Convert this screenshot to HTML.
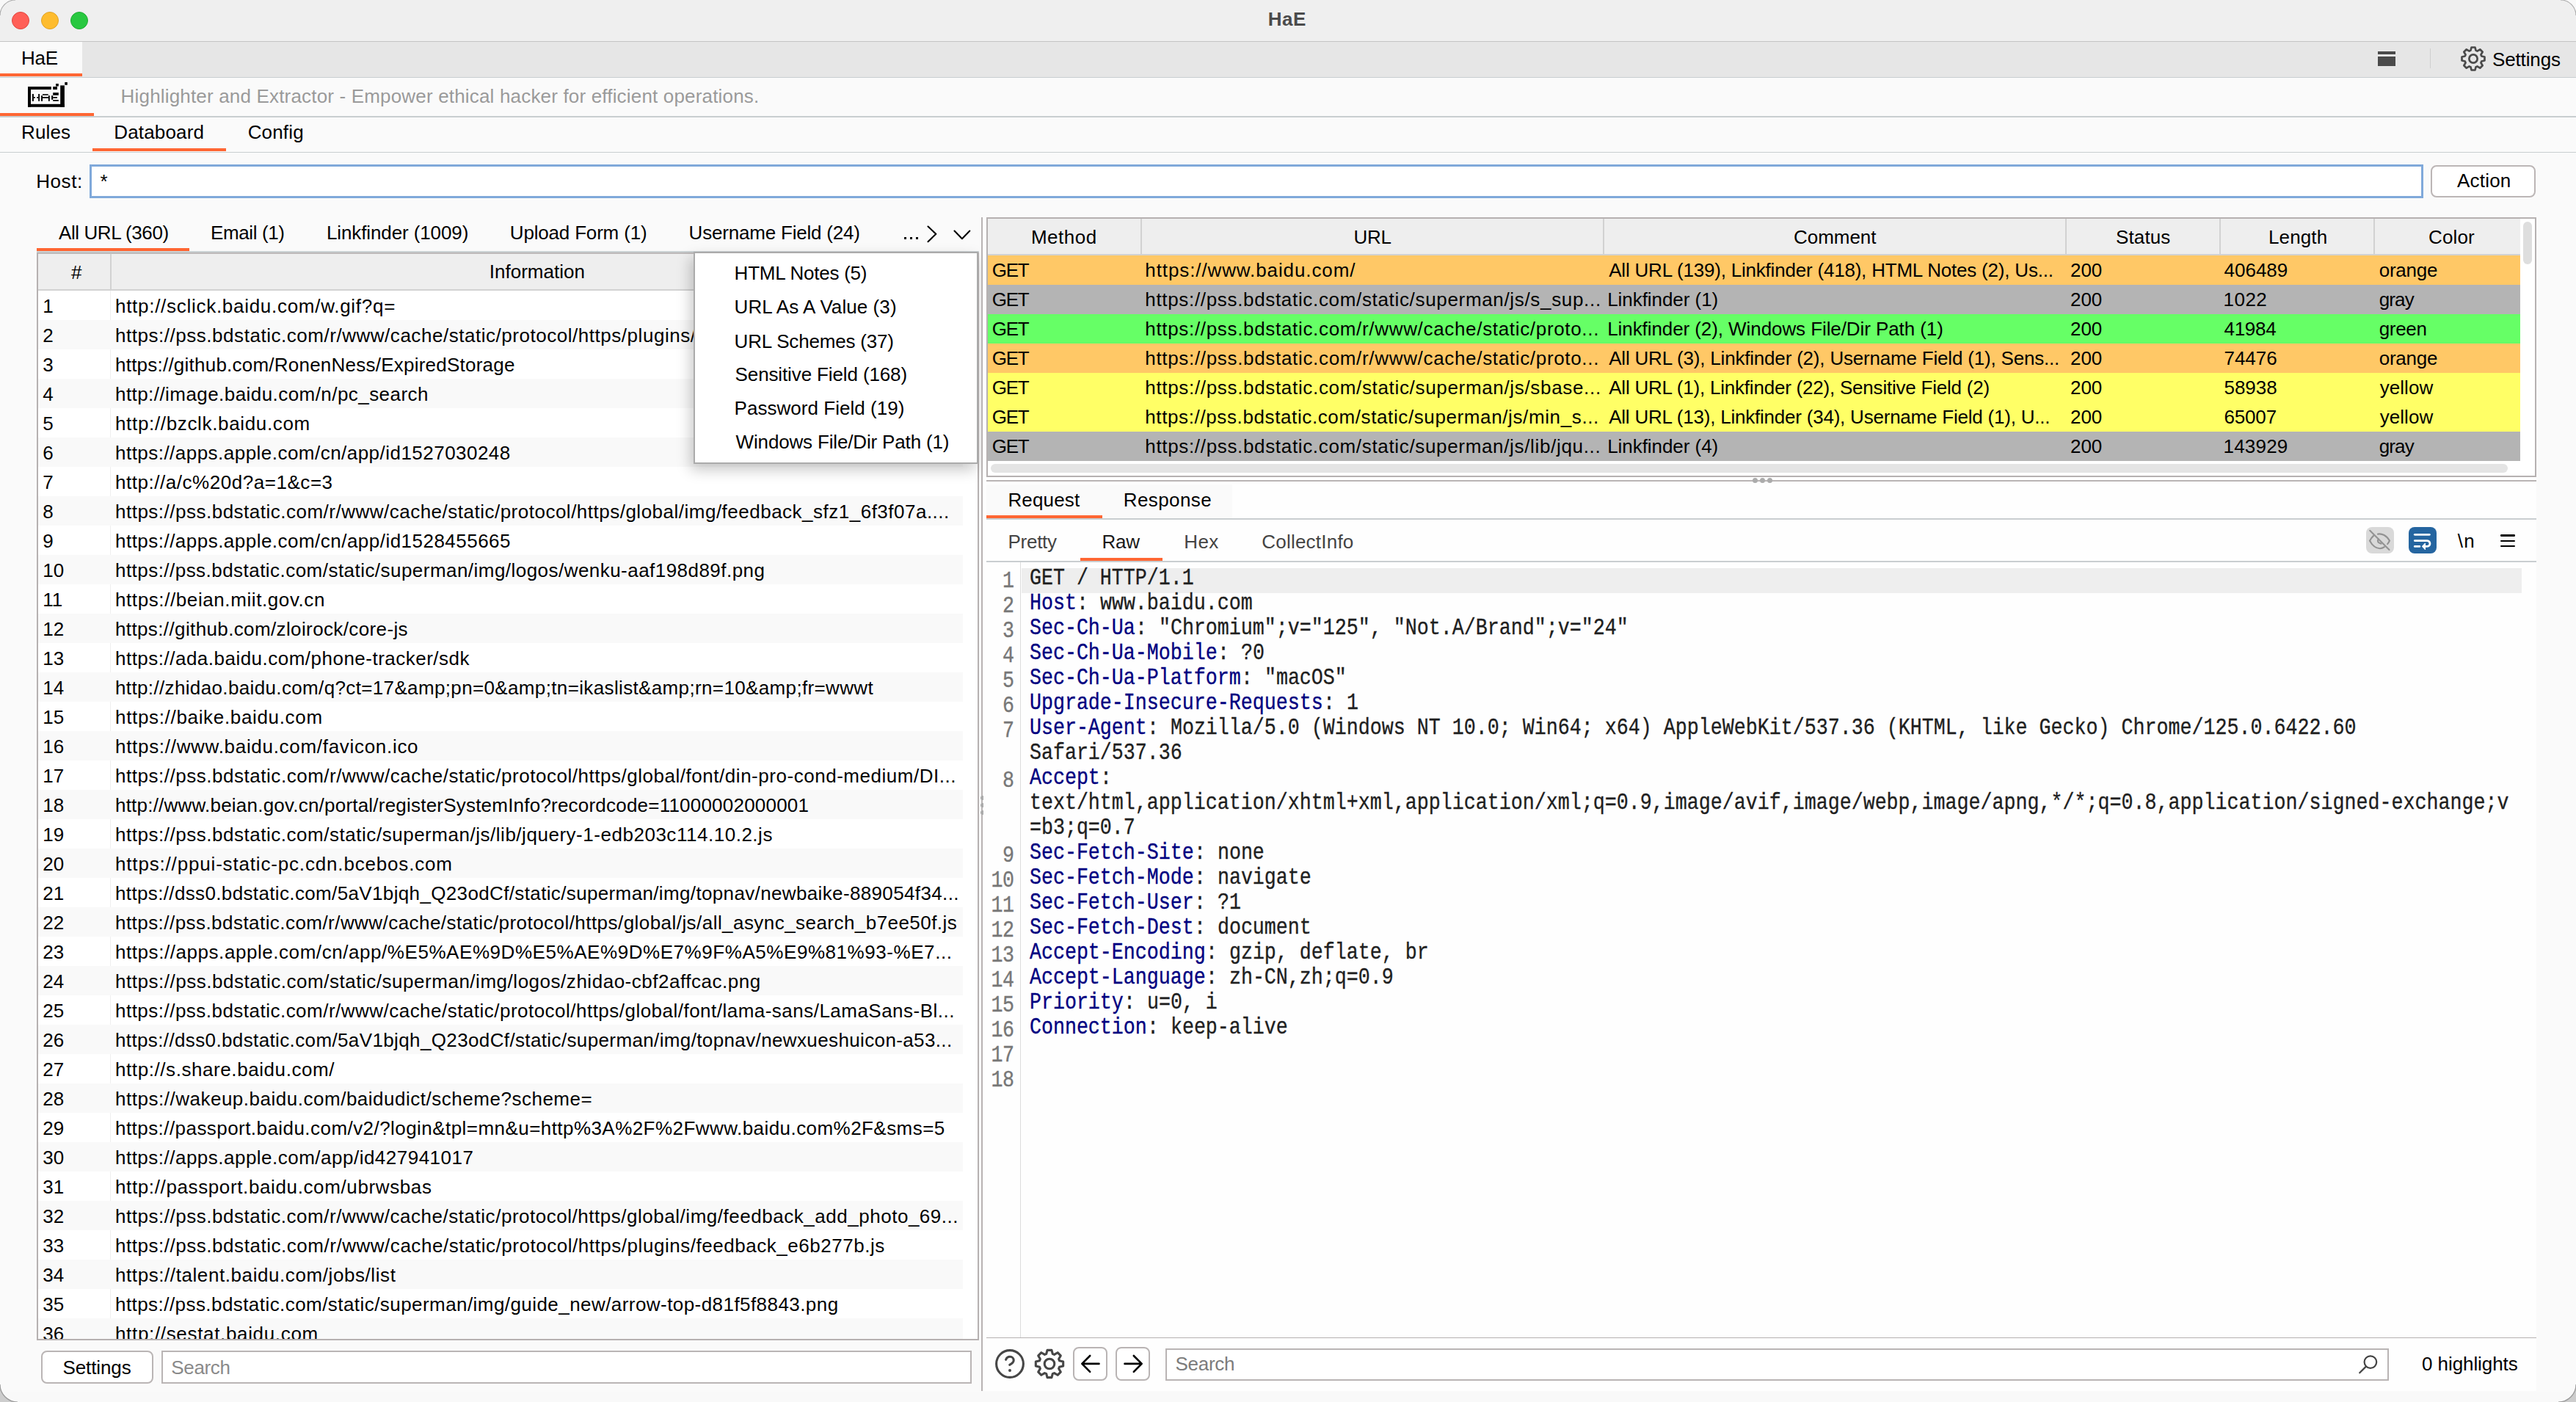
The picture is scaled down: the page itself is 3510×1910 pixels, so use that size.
<!DOCTYPE html><html><head><meta charset="utf-8"><title>HaE</title><style>
*{margin:0;padding:0;box-sizing:border-box}
html,body{width:3510px;height:1910px;overflow:hidden;background:#ffffff}
body{position:relative;font-family:'Liberation Sans',sans-serif}
.a{position:absolute}
.t{position:absolute;white-space:pre;line-height:1.117;}
svg{position:absolute;overflow:visible}
</style></head><body><div class="a" style="left:0.0px;top:0.0px;width:3510.0px;height:1910.0px;background:#fafafa;"></div>
<div class="a" style="left:0.0px;top:0.0px;width:3510.0px;height:56.0px;background:#efefef;"></div>
<div class="a" style="left:0.0px;top:56.0px;width:3510.0px;height:1.0px;background:#c4c4c4;"></div>
<div class="a" style="left:16.0px;top:16.0px;width:24.0px;height:24.0px;background:#ff5f57;border-radius:50%;border:1px solid #e2463f;"></div>
<div class="a" style="left:56.0px;top:16.0px;width:24.0px;height:24.0px;background:#febc2e;border-radius:50%;border:1px solid #e1a325;"></div>
<div class="a" style="left:96.0px;top:16.0px;width:24.0px;height:24.0px;background:#28c840;border-radius:50%;border:1px solid #1eab32;"></div>
<div class="t" style="left:1727.8px;top:12.3px;font-size:26px;color:#4b4b4b;font-weight:bold;letter-spacing:0.500px;">HaE</div>
<div class="a" style="left:0.0px;top:57.0px;width:3510.0px;height:48.0px;background:#e6e6e6;"></div>
<div class="a" style="left:0.0px;top:57.0px;width:112.0px;height:47.0px;background:#fafafa;"></div>
<div class="a" style="left:0.0px;top:100.0px;width:112.0px;height:4.0px;background:#ff6633;"></div>
<div class="a" style="left:0.0px;top:104.5px;width:3510.0px;height:1.5px;background:#c9ced0;"></div>
<div class="t" style="left:29.0px;top:64.8px;font-size:26px;color:#000;letter-spacing:-0.200px;">HaE</div>
<div class="a" style="left:3240.0px;top:69.5px;width:24.0px;height:4.5px;background:#4a4a4a;"></div>
<div class="a" style="left:3240.0px;top:77.0px;width:24.0px;height:13.0px;background:#4a4a4a;"></div>
<div class="a" style="left:3310.5px;top:66.0px;width:1.5px;height:27.0px;background:#cfcfcf;"></div>
<svg style="left:0;top:0" width="1" height="1"><path d="M3366.46,68.76 L3367.55,64.51 L3372.45,64.51 L3373.54,68.76 A11.79,11.79 0 0 1 3375.44,69.55 L3379.22,67.31 L3382.69,70.78 L3380.45,74.56 A11.79,11.79 0 0 1 3381.24,76.46 L3385.49,77.55 L3385.49,82.45 L3381.24,83.54 A11.79,11.79 0 0 1 3380.45,85.44 L3382.69,89.22 L3379.22,92.69 L3375.44,90.45 A11.79,11.79 0 0 1 3373.54,91.24 L3372.45,95.49 L3367.55,95.49 L3366.46,91.24 A11.79,11.79 0 0 1 3364.56,90.45 L3360.78,92.69 L3357.31,89.22 L3359.55,85.44 A11.79,11.79 0 0 1 3358.76,83.54 L3354.51,82.45 L3354.51,77.55 L3358.76,76.46 A11.79,11.79 0 0 1 3359.55,74.56 L3357.31,70.78 L3360.78,67.31 L3364.56,69.55 A11.79,11.79 0 0 1 3366.46,68.76 Z" fill="none" stroke="#4a4a4a" stroke-width="2.7" stroke-linejoin="round"/><circle cx="3370" cy="80" r="5.64" fill="none" stroke="#4a4a4a" stroke-width="2.7"/></svg>
<div class="t" style="left:3396.0px;top:66.5px;font-size:26px;color:#000;letter-spacing:-0.143px;">Settings</div>
<div class="a" style="left:0.0px;top:106.0px;width:3510.0px;height:52.0px;background:#fafafa;"></div>
<svg style="left:0;top:0" width="1" height="1"><g fill="#000"><rect x="38.0" y="118.0" width="31.8" height="4.0"/><rect x="72.2" y="118.0" width="5.7" height="4.0"/><rect x="38.0" y="118.0" width="4.0" height="27.8"/><rect x="38.0" y="141.8" width="49.9" height="4.0"/><rect x="82.2" y="116.4" width="5.7" height="29.4"/><rect x="76.1" y="114.0" width="3.7" height="3.5"/><rect x="88.3" y="112.0" width="3.5" height="3.8"/><rect x="43.9" y="128.0" width="2.0" height="9.8"/><rect x="52.2" y="128.0" width="1.8" height="9.8"/><rect x="45.9" y="132.0" width="2.0" height="1.8"/><rect x="50.2" y="132.0" width="2.0" height="1.8"/><rect x="56.1" y="130.2" width="1.9" height="7.6"/><rect x="65.9" y="130.2" width="1.9" height="7.6"/><rect x="58.0" y="128.2" width="7.7" height="1.6"/><rect x="58.0" y="132.0" width="7.9" height="1.8"/><rect x="70.1" y="130.2" width="2.1" height="5.6"/><rect x="72.2" y="126.2" width="7.6" height="3.6"/><rect x="72.2" y="132.0" width="5.7" height="1.8"/><rect x="72.2" y="136.0" width="7.6" height="1.8"/></g></svg>
<div class="a" style="left:0.0px;top:154.0px;width:128.0px;height:4.0px;background:#ff6633;"></div>
<div class="a" style="left:0.0px;top:158.0px;width:3510.0px;height:1.5px;background:#c9ced0;"></div>
<div class="t" style="left:164.6px;top:116.5px;font-size:26px;color:#9a9a9a;letter-spacing:0.175px;">Highlighter and Extractor - Empower ethical hacker for efficient operations.</div>
<div class="t" style="left:29.1px;top:166.1px;font-size:26px;color:#000;letter-spacing:0.100px;">Rules</div>
<div class="t" style="left:155.2px;top:166.1px;font-size:26px;color:#000;letter-spacing:0.175px;">Databoard</div>
<div class="t" style="left:337.7px;top:166.1px;font-size:26px;color:#000;letter-spacing:0.160px;">Config</div>
<div class="a" style="left:126.0px;top:202.0px;width:182.0px;height:4.0px;background:#ff6633;"></div>
<div class="a" style="left:0.0px;top:206.5px;width:3510.0px;height:1.5px;background:#c9ced0;"></div>
<div class="t" style="left:49.2px;top:232.6px;font-size:26px;color:#000;letter-spacing:0.575px;">Host:</div>
<div class="a" style="left:122.4px;top:223.8px;width:3179.6px;height:46.0px;background:#ffffff;border:3px solid #80a9da;"></div>
<div class="t" style="left:136.6px;top:232.5px;font-size:26px;color:#000;">*</div>
<div class="a" style="left:3312.0px;top:225.0px;width:143.0px;height:44.0px;background:#ffffff;border:2px solid #bcb6b6;border-radius:8px;"></div>
<div class="t" style="left:3348.0px;top:232.3px;font-size:26px;color:#000;letter-spacing:0.200px;">Action</div>
<div class="t" style="left:80.0px;top:302.5px;font-size:26px;color:#000;letter-spacing:-0.417px;">All URL (360)</div>
<div class="t" style="left:287.1px;top:302.5px;font-size:26px;color:#000;letter-spacing:-0.400px;">Email (1)</div>
<div class="t" style="left:445.0px;top:302.5px;font-size:26px;color:#000;letter-spacing:-0.112px;">Linkfinder (1009)</div>
<div class="t" style="left:694.8px;top:302.5px;font-size:26px;color:#000;letter-spacing:-0.179px;">Upload Form (1)</div>
<div class="t" style="left:938.6px;top:302.5px;font-size:26px;color:#000;letter-spacing:-0.200px;">Username Field (24)</div>
<div class="a" style="left:50.0px;top:338.0px;width:208.0px;height:4.0px;background:#ff6633;"></div>
<div class="a" style="left:1232.0px;top:323.0px;width:3.0px;height:3.0px;background:#000;"></div>
<div class="a" style="left:1240.0px;top:323.0px;width:3.0px;height:3.0px;background:#000;"></div>
<div class="a" style="left:1248.0px;top:323.0px;width:3.0px;height:3.0px;background:#000;"></div>
<svg style="left:0;top:0" width="1" height="1"><g fill="none" stroke="#000" stroke-width="2.1" stroke-linecap="round" stroke-linejoin="round"><path d="M1264.5,308.5 L1275.3,318.8 L1264.5,329.2"/><path d="M1300.5,314.6 L1310.9,325.2 L1321.3,314.6"/></g></svg>
<div class="a" style="left:50.0px;top:342.0px;width:1284.0px;height:2.0px;background:#cbd2d4;"></div>
<div class="a" style="left:50.0px;top:343.8px;width:1284.0px;height:1482.2px;background:#ffffff;border:2px solid #b6b1b1;"></div>
<div class="a" style="left:0;top:0;width:3510px;height:1910px;clip-path:polygon(52px 345.8px,1332px 345.8px,1332px 1824px,52px 1824px)">
<div class="a" style="left:52.0px;top:345.0px;width:1260.0px;height:50.0px;background:#eeeeee;"></div>
<div class="a" style="left:52.0px;top:394.0px;width:1260.0px;height:2.0px;background:#d2d2d2;"></div>
<div class="a" style="left:150.0px;top:345.0px;width:2.0px;height:50.0px;background:#d2d2d2;"></div>
<div class="a" style="left:150.0px;top:396.0px;width:1.0px;height:40.0px;background:#efefef;"></div>
<div class="a" style="left:52.0px;top:436.0px;width:1260.0px;height:40.0px;background:#f9f9f9;"></div>
<div class="a" style="left:150.0px;top:476.0px;width:1.0px;height:40.0px;background:#efefef;"></div>
<div class="a" style="left:52.0px;top:516.0px;width:1260.0px;height:40.0px;background:#f9f9f9;"></div>
<div class="a" style="left:150.0px;top:556.0px;width:1.0px;height:40.0px;background:#efefef;"></div>
<div class="a" style="left:52.0px;top:596.0px;width:1260.0px;height:40.0px;background:#f9f9f9;"></div>
<div class="a" style="left:150.0px;top:636.0px;width:1.0px;height:40.0px;background:#efefef;"></div>
<div class="a" style="left:52.0px;top:676.0px;width:1260.0px;height:40.0px;background:#f9f9f9;"></div>
<div class="a" style="left:150.0px;top:716.0px;width:1.0px;height:40.0px;background:#efefef;"></div>
<div class="a" style="left:52.0px;top:756.0px;width:1260.0px;height:40.0px;background:#f9f9f9;"></div>
<div class="a" style="left:150.0px;top:796.0px;width:1.0px;height:40.0px;background:#efefef;"></div>
<div class="a" style="left:52.0px;top:836.0px;width:1260.0px;height:40.0px;background:#f9f9f9;"></div>
<div class="a" style="left:150.0px;top:876.0px;width:1.0px;height:40.0px;background:#efefef;"></div>
<div class="a" style="left:52.0px;top:916.0px;width:1260.0px;height:40.0px;background:#f9f9f9;"></div>
<div class="a" style="left:150.0px;top:956.0px;width:1.0px;height:40.0px;background:#efefef;"></div>
<div class="a" style="left:52.0px;top:996.0px;width:1260.0px;height:40.0px;background:#f9f9f9;"></div>
<div class="a" style="left:150.0px;top:1036.0px;width:1.0px;height:40.0px;background:#efefef;"></div>
<div class="a" style="left:52.0px;top:1076.0px;width:1260.0px;height:40.0px;background:#f9f9f9;"></div>
<div class="a" style="left:150.0px;top:1116.0px;width:1.0px;height:40.0px;background:#efefef;"></div>
<div class="a" style="left:52.0px;top:1156.0px;width:1260.0px;height:40.0px;background:#f9f9f9;"></div>
<div class="a" style="left:150.0px;top:1196.0px;width:1.0px;height:40.0px;background:#efefef;"></div>
<div class="a" style="left:52.0px;top:1236.0px;width:1260.0px;height:40.0px;background:#f9f9f9;"></div>
<div class="a" style="left:150.0px;top:1276.0px;width:1.0px;height:40.0px;background:#efefef;"></div>
<div class="a" style="left:52.0px;top:1316.0px;width:1260.0px;height:40.0px;background:#f9f9f9;"></div>
<div class="a" style="left:150.0px;top:1356.0px;width:1.0px;height:40.0px;background:#efefef;"></div>
<div class="a" style="left:52.0px;top:1396.0px;width:1260.0px;height:40.0px;background:#f9f9f9;"></div>
<div class="a" style="left:150.0px;top:1436.0px;width:1.0px;height:40.0px;background:#efefef;"></div>
<div class="a" style="left:52.0px;top:1476.0px;width:1260.0px;height:40.0px;background:#f9f9f9;"></div>
<div class="a" style="left:150.0px;top:1516.0px;width:1.0px;height:40.0px;background:#efefef;"></div>
<div class="a" style="left:52.0px;top:1556.0px;width:1260.0px;height:40.0px;background:#f9f9f9;"></div>
<div class="a" style="left:150.0px;top:1596.0px;width:1.0px;height:40.0px;background:#efefef;"></div>
<div class="a" style="left:52.0px;top:1636.0px;width:1260.0px;height:40.0px;background:#f9f9f9;"></div>
<div class="a" style="left:150.0px;top:1676.0px;width:1.0px;height:40.0px;background:#efefef;"></div>
<div class="a" style="left:52.0px;top:1716.0px;width:1260.0px;height:40.0px;background:#f9f9f9;"></div>
<div class="a" style="left:150.0px;top:1756.0px;width:1.0px;height:40.0px;background:#efefef;"></div>
<div class="a" style="left:52.0px;top:1796.0px;width:1260.0px;height:40.0px;background:#f9f9f9;"></div>
<div class="t" style="left:97.0px;top:356.5px;font-size:26px;color:#000;letter-spacing:-1.000px;">#</div>
<div class="t" style="left:666.8px;top:356.2px;font-size:26px;color:#000;">Information</div>
<div class="t" style="left:58.2px;top:402.6px;font-size:26px;color:#000;">1</div>
<div class="t" style="left:157.0px;top:402.6px;font-size:26px;color:#000;letter-spacing:0.716px;">http://sclick.baidu.com/w.gif?q=</div>
<div class="t" style="left:58.2px;top:442.6px;font-size:26px;color:#000;">2</div>
<div class="t" style="left:157.0px;top:442.6px;font-size:26px;color:#000;letter-spacing:0.533px;">https://pss.bdstatic.com/r/www/cache/static/protocol/https/plugins/feedback_e6b277b.js</div>
<div class="t" style="left:58.2px;top:482.6px;font-size:26px;color:#000;">3</div>
<div class="t" style="left:157.0px;top:482.6px;font-size:26px;color:#000;letter-spacing:0.229px;">https://github.com/RonenNess/ExpiredStorage</div>
<div class="t" style="left:58.2px;top:522.6px;font-size:26px;color:#000;">4</div>
<div class="t" style="left:157.0px;top:522.6px;font-size:26px;color:#000;letter-spacing:0.439px;">http://image.baidu.com/n/pc_search</div>
<div class="t" style="left:58.2px;top:562.6px;font-size:26px;color:#000;">5</div>
<div class="t" style="left:157.0px;top:562.6px;font-size:26px;color:#000;letter-spacing:0.657px;">http://bzclk.baidu.com</div>
<div class="t" style="left:58.2px;top:602.6px;font-size:26px;color:#000;">6</div>
<div class="t" style="left:157.0px;top:602.6px;font-size:26px;color:#000;letter-spacing:0.471px;">https://apps.apple.com/cn/app/id1527030248</div>
<div class="t" style="left:58.2px;top:642.6px;font-size:26px;color:#000;">7</div>
<div class="t" style="left:157.0px;top:642.6px;font-size:26px;color:#000;letter-spacing:0.538px;">http://a/c%20d?a=1&amp;c=3</div>
<div class="t" style="left:58.2px;top:682.6px;font-size:26px;color:#000;">8</div>
<div class="t" style="left:157.0px;top:682.6px;font-size:26px;color:#000;letter-spacing:0.496px;">https://pss.bdstatic.com/r/www/cache/static/protocol/https/global/img/feedback_sfz1_6f3f07a....</div>
<div class="t" style="left:58.2px;top:722.6px;font-size:26px;color:#000;">9</div>
<div class="t" style="left:157.0px;top:722.6px;font-size:26px;color:#000;letter-spacing:0.476px;">https://apps.apple.com/cn/app/id1528455665</div>
<div class="t" style="left:58.2px;top:762.6px;font-size:26px;color:#000;">10</div>
<div class="t" style="left:157.0px;top:762.6px;font-size:26px;color:#000;letter-spacing:0.461px;">https://pss.bdstatic.com/static/superman/img/logos/wenku-aaf198d89f.png</div>
<div class="t" style="left:58.2px;top:802.6px;font-size:26px;color:#000;">11</div>
<div class="t" style="left:157.0px;top:802.6px;font-size:26px;color:#000;letter-spacing:0.592px;">https://beian.miit.gov.cn</div>
<div class="t" style="left:58.2px;top:842.6px;font-size:26px;color:#000;">12</div>
<div class="t" style="left:157.0px;top:842.6px;font-size:26px;color:#000;letter-spacing:0.376px;">https://github.com/zloirock/core-js</div>
<div class="t" style="left:58.2px;top:882.6px;font-size:26px;color:#000;">13</div>
<div class="t" style="left:157.0px;top:882.6px;font-size:26px;color:#000;letter-spacing:0.487px;">https://ada.baidu.com/phone-tracker/sdk</div>
<div class="t" style="left:58.2px;top:922.6px;font-size:26px;color:#000;">14</div>
<div class="t" style="left:157.0px;top:922.6px;font-size:26px;color:#000;letter-spacing:0.358px;">http://zhidao.baidu.com/q?ct=17&amp;amp;pn=0&amp;amp;tn=ikaslist&amp;amp;rn=10&amp;amp;fr=wwwt</div>
<div class="t" style="left:58.2px;top:962.6px;font-size:26px;color:#000;">15</div>
<div class="t" style="left:157.0px;top:962.6px;font-size:26px;color:#000;letter-spacing:0.668px;">https://baike.baidu.com</div>
<div class="t" style="left:58.2px;top:1002.6px;font-size:26px;color:#000;">16</div>
<div class="t" style="left:157.0px;top:1002.6px;font-size:26px;color:#000;letter-spacing:0.700px;">https://www.baidu.com/favicon.ico</div>
<div class="t" style="left:58.2px;top:1042.6px;font-size:26px;color:#000;">17</div>
<div class="t" style="left:157.0px;top:1042.6px;font-size:26px;color:#000;letter-spacing:0.528px;">https://pss.bdstatic.com/r/www/cache/static/protocol/https/global/font/din-pro-cond-medium/DI...</div>
<div class="t" style="left:58.2px;top:1082.6px;font-size:26px;color:#000;">18</div>
<div class="t" style="left:157.0px;top:1082.6px;font-size:26px;color:#000;letter-spacing:0.214px;">http://www.beian.gov.cn/portal/registerSystemInfo?recordcode=11000002000001</div>
<div class="t" style="left:58.2px;top:1122.6px;font-size:26px;color:#000;">19</div>
<div class="t" style="left:157.0px;top:1122.6px;font-size:26px;color:#000;letter-spacing:0.526px;">https://pss.bdstatic.com/static/superman/js/lib/jquery-1-edb203c114.10.2.js</div>
<div class="t" style="left:58.2px;top:1162.6px;font-size:26px;color:#000;">20</div>
<div class="t" style="left:157.0px;top:1162.6px;font-size:26px;color:#000;letter-spacing:0.828px;">https://ppui-static-pc.cdn.bcebos.com</div>
<div class="t" style="left:58.2px;top:1202.6px;font-size:26px;color:#000;">21</div>
<div class="t" style="left:157.0px;top:1202.6px;font-size:26px;color:#000;letter-spacing:0.358px;">https://dss0.bdstatic.com/5aV1bjqh_Q23odCf/static/superman/img/topnav/newbaike-889054f34...</div>
<div class="t" style="left:58.2px;top:1242.6px;font-size:26px;color:#000;">22</div>
<div class="t" style="left:157.0px;top:1242.6px;font-size:26px;color:#000;letter-spacing:0.449px;">https://pss.bdstatic.com/r/www/cache/static/protocol/https/global/js/all_async_search_b7ee50f.js</div>
<div class="t" style="left:58.2px;top:1282.6px;font-size:26px;color:#000;">23</div>
<div class="t" style="left:157.0px;top:1282.6px;font-size:26px;color:#000;letter-spacing:0.557px;">https://apps.apple.com/cn/app/%E5%AE%9D%E5%AE%9D%E7%9F%A5%E9%81%93-%E7...</div>
<div class="t" style="left:58.2px;top:1322.6px;font-size:26px;color:#000;">24</div>
<div class="t" style="left:157.0px;top:1322.6px;font-size:26px;color:#000;letter-spacing:0.524px;">https://pss.bdstatic.com/static/superman/img/logos/zhidao-cbf2affcac.png</div>
<div class="t" style="left:58.2px;top:1362.6px;font-size:26px;color:#000;">25</div>
<div class="t" style="left:157.0px;top:1362.6px;font-size:26px;color:#000;letter-spacing:0.480px;">https://pss.bdstatic.com/r/www/cache/static/protocol/https/global/font/lama-sans/LamaSans-Bl...</div>
<div class="t" style="left:58.2px;top:1402.6px;font-size:26px;color:#000;">26</div>
<div class="t" style="left:157.0px;top:1402.6px;font-size:26px;color:#000;letter-spacing:0.372px;">https://dss0.bdstatic.com/5aV1bjqh_Q23odCf/static/superman/img/topnav/newxueshuicon-a53...</div>
<div class="t" style="left:58.2px;top:1442.6px;font-size:26px;color:#000;">27</div>
<div class="t" style="left:157.0px;top:1442.6px;font-size:26px;color:#000;letter-spacing:0.575px;">http://s.share.baidu.com/</div>
<div class="t" style="left:58.2px;top:1482.6px;font-size:26px;color:#000;">28</div>
<div class="t" style="left:157.0px;top:1482.6px;font-size:26px;color:#000;letter-spacing:0.513px;">https://wakeup.baidu.com/baidudict/scheme?scheme=</div>
<div class="t" style="left:58.2px;top:1522.6px;font-size:26px;color:#000;">29</div>
<div class="t" style="left:157.0px;top:1522.6px;font-size:26px;color:#000;letter-spacing:0.444px;">https://passport.baidu.com/v2/?login&amp;tpl=mn&amp;u=http%3A%2F%2Fwww.baidu.com%2F&amp;sms=5</div>
<div class="t" style="left:58.2px;top:1562.6px;font-size:26px;color:#000;">30</div>
<div class="t" style="left:157.0px;top:1562.6px;font-size:26px;color:#000;letter-spacing:0.489px;">https://apps.apple.com/app/id427941017</div>
<div class="t" style="left:58.2px;top:1602.6px;font-size:26px;color:#000;">31</div>
<div class="t" style="left:157.0px;top:1602.6px;font-size:26px;color:#000;letter-spacing:0.621px;">http://passport.baidu.com/ubrwsbas</div>
<div class="t" style="left:58.2px;top:1642.6px;font-size:26px;color:#000;">32</div>
<div class="t" style="left:157.0px;top:1642.6px;font-size:26px;color:#000;letter-spacing:0.524px;">https://pss.bdstatic.com/r/www/cache/static/protocol/https/global/img/feedback_add_photo_69...</div>
<div class="t" style="left:58.2px;top:1682.6px;font-size:26px;color:#000;">33</div>
<div class="t" style="left:157.0px;top:1682.6px;font-size:26px;color:#000;letter-spacing:0.533px;">https://pss.bdstatic.com/r/www/cache/static/protocol/https/plugins/feedback_e6b277b.js</div>
<div class="t" style="left:58.2px;top:1722.6px;font-size:26px;color:#000;">34</div>
<div class="t" style="left:157.0px;top:1722.6px;font-size:26px;color:#000;letter-spacing:0.579px;">https://talent.baidu.com/jobs/list</div>
<div class="t" style="left:58.2px;top:1762.6px;font-size:26px;color:#000;">35</div>
<div class="t" style="left:157.0px;top:1762.6px;font-size:26px;color:#000;letter-spacing:0.438px;">https://pss.bdstatic.com/static/superman/img/guide_new/arrow-top-d81f5f8843.png</div>
<div class="t" style="left:58.2px;top:1802.6px;font-size:26px;color:#000;">36</div>
<div class="t" style="left:157.0px;top:1802.6px;font-size:26px;color:#000;letter-spacing:0.664px;">http://sestat.baidu.com</div>
</div>
<div class="a" style="left:56.2px;top:1840.2px;width:153.3px;height:45.3px;background:#ffffff;border:2px solid #bab5b5;border-radius:8px;"></div>
<div class="t" style="left:85.4px;top:1848.5px;font-size:26px;color:#000;letter-spacing:-0.086px;">Settings</div>
<div class="a" style="left:220.2px;top:1840.2px;width:1103.4px;height:45.3px;background:#ffffff;border:2px solid #bab5b5;"></div>
<div class="t" style="left:233.3px;top:1848.5px;font-size:26px;color:#8a8a8a;letter-spacing:-0.360px;">Search</div>
<div class="a" style="left:944.5px;top:343.4px;width:388.9px;height:289.0px;background:#ffffff;border:2px solid #ababab;box-shadow:-4px 8px 18px rgba(0,0,0,0.22);"></div>
<div class="t" style="left:1000.6px;top:358.1px;font-size:26px;color:#000;letter-spacing:-0.238px;">HTML Notes (5)</div>
<div class="t" style="left:1000.6px;top:403.8px;font-size:26px;color:#000;letter-spacing:0.076px;">URL As A Value (3)</div>
<div class="t" style="left:1000.6px;top:450.5px;font-size:26px;color:#000;letter-spacing:-0.180px;">URL Schemes (37)</div>
<div class="t" style="left:1001.6px;top:496.0px;font-size:26px;color:#000;letter-spacing:-0.125px;">Sensitive Field (168)</div>
<div class="t" style="left:1000.6px;top:541.8px;font-size:26px;color:#000;letter-spacing:0.033px;">Password Field (19)</div>
<div class="t" style="left:1002.6px;top:587.8px;font-size:26px;color:#000;letter-spacing:-0.162px;">Windows File/Dir Path (1)</div>
<div class="a" style="left:1337.3px;top:296.0px;width:2.2px;height:1599.0px;background:#b9b4b4;"></div>
<div class="a" style="left:1336.0px;top:1084.0px;width:6.0px;height:6.0px;background:#ababab;border-radius:50%;"></div>
<div class="a" style="left:1336.0px;top:1094.0px;width:6.0px;height:6.0px;background:#ababab;border-radius:50%;"></div>
<div class="a" style="left:1336.0px;top:1104.0px;width:6.0px;height:6.0px;background:#ababab;border-radius:50%;"></div>
<div class="a" style="left:1339.5px;top:296.0px;width:2116.5px;height:1599.0px;background:#fefefe;"></div>
<div class="a" style="left:1344.0px;top:296.0px;width:2112.0px;height:354.0px;background:#ffffff;border:2px solid #b6b1b1;"></div>
<div class="a" style="left:1346.0px;top:298.0px;width:2088.0px;height:48.0px;background:#eeeeee;"></div>
<div class="a" style="left:1346.0px;top:346.0px;width:2088.0px;height:2.0px;background:#d2d2d2;"></div>
<div class="a" style="left:1553.7px;top:298.0px;width:2.0px;height:48.0px;background:#d2d2d2;"></div>
<div class="a" style="left:2184.0px;top:298.0px;width:2.0px;height:48.0px;background:#d2d2d2;"></div>
<div class="a" style="left:2813.5px;top:298.0px;width:2.0px;height:48.0px;background:#d2d2d2;"></div>
<div class="a" style="left:3024.0px;top:298.0px;width:2.0px;height:48.0px;background:#d2d2d2;"></div>
<div class="a" style="left:3233.7px;top:298.0px;width:2.0px;height:48.0px;background:#d2d2d2;"></div>
<div class="t" style="left:1404.9px;top:308.5px;font-size:26px;color:#000;letter-spacing:0.520px;">Method</div>
<div class="t" style="left:1844.4px;top:308.5px;font-size:26px;color:#000;letter-spacing:-0.200px;">URL</div>
<div class="t" style="left:2444.0px;top:308.5px;font-size:26px;color:#000;letter-spacing:-0.033px;">Comment</div>
<div class="t" style="left:2883.0px;top:308.5px;font-size:26px;color:#000;letter-spacing:0.120px;">Status</div>
<div class="t" style="left:3091.0px;top:308.5px;font-size:26px;color:#000;letter-spacing:0.120px;">Length</div>
<div class="t" style="left:3309.0px;top:308.5px;font-size:26px;color:#000;letter-spacing:0.125px;">Color</div>
<div class="a" style="left:1346.0px;top:348.0px;width:2088.0px;height:40.0px;background:#ffc866;"></div>
<div class="t" style="left:1351.7px;top:354.0px;font-size:26px;color:#000;letter-spacing:-1.200px;">GET</div>
<div class="t" style="left:1560.3px;top:354.0px;font-size:26px;color:#000;letter-spacing:0.895px;">https://www.baidu.com/</div>
<div class="t" style="left:2192.2px;top:354.0px;font-size:26px;color:#000;letter-spacing:-0.202px;">All URL (139), Linkfinder (418), HTML Notes (2), Us...</div>
<div class="t" style="left:2821.1px;top:354.0px;font-size:26px;color:#000;letter-spacing:-0.100px;">200</div>
<div class="t" style="left:3030.6px;top:354.0px;font-size:26px;color:#000;letter-spacing:-0.020px;">406489</div>
<div class="t" style="left:3241.7px;top:354.0px;font-size:26px;color:#000;letter-spacing:-0.220px;">orange</div>
<div class="a" style="left:1346.0px;top:388.0px;width:2088.0px;height:40.0px;background:#b4b4b4;"></div>
<div class="t" style="left:1351.7px;top:394.0px;font-size:26px;color:#000;letter-spacing:-1.200px;">GET</div>
<div class="t" style="left:1560.3px;top:394.0px;font-size:26px;color:#000;letter-spacing:0.669px;">https://pss.bdstatic.com/static/superman/js/s_sup...</div>
<div class="t" style="left:2190.2px;top:394.0px;font-size:26px;color:#000;letter-spacing:-0.054px;">Linkfinder (1)</div>
<div class="t" style="left:2821.1px;top:394.0px;font-size:26px;color:#000;letter-spacing:-0.100px;">200</div>
<div class="t" style="left:3029.6px;top:394.0px;font-size:26px;color:#000;letter-spacing:0.467px;">1022</div>
<div class="t" style="left:3241.7px;top:394.0px;font-size:26px;color:#000;letter-spacing:-0.867px;">gray</div>
<div class="a" style="left:1346.0px;top:428.0px;width:2088.0px;height:40.0px;background:#66ff66;"></div>
<div class="t" style="left:1351.7px;top:434.0px;font-size:26px;color:#000;letter-spacing:-1.200px;">GET</div>
<div class="t" style="left:1560.3px;top:434.0px;font-size:26px;color:#000;letter-spacing:0.673px;">https://pss.bdstatic.com/r/www/cache/static/proto...</div>
<div class="t" style="left:2190.2px;top:434.0px;font-size:26px;color:#000;letter-spacing:-0.080px;">Linkfinder (2), Windows File/Dir Path (1)</div>
<div class="t" style="left:2821.1px;top:434.0px;font-size:26px;color:#000;letter-spacing:-0.100px;">200</div>
<div class="t" style="left:3030.6px;top:434.0px;font-size:26px;color:#000;letter-spacing:-0.325px;">41984</div>
<div class="t" style="left:3241.7px;top:434.0px;font-size:26px;color:#000;letter-spacing:-0.325px;">green</div>
<div class="a" style="left:1346.0px;top:468.0px;width:2088.0px;height:40.0px;background:#ffc866;"></div>
<div class="t" style="left:1351.7px;top:474.0px;font-size:26px;color:#000;letter-spacing:-1.200px;">GET</div>
<div class="t" style="left:1560.3px;top:474.0px;font-size:26px;color:#000;letter-spacing:0.673px;">https://pss.bdstatic.com/r/www/cache/static/proto...</div>
<div class="t" style="left:2192.2px;top:474.0px;font-size:26px;color:#000;letter-spacing:-0.193px;">All URL (3), Linkfinder (2), Username Field (1), Sens...</div>
<div class="t" style="left:2821.1px;top:474.0px;font-size:26px;color:#000;letter-spacing:-0.100px;">200</div>
<div class="t" style="left:3030.6px;top:474.0px;font-size:26px;color:#000;letter-spacing:-0.075px;">74476</div>
<div class="t" style="left:3241.7px;top:474.0px;font-size:26px;color:#000;letter-spacing:-0.220px;">orange</div>
<div class="a" style="left:1346.0px;top:508.0px;width:2088.0px;height:40.0px;background:#ffff66;"></div>
<div class="t" style="left:1351.7px;top:514.0px;font-size:26px;color:#000;letter-spacing:-1.200px;">GET</div>
<div class="t" style="left:1560.3px;top:514.0px;font-size:26px;color:#000;letter-spacing:0.669px;">https://pss.bdstatic.com/static/superman/js/sbase...</div>
<div class="t" style="left:2192.2px;top:514.0px;font-size:26px;color:#000;letter-spacing:-0.215px;">All URL (1), Linkfinder (22), Sensitive Field (2)</div>
<div class="t" style="left:2821.1px;top:514.0px;font-size:26px;color:#000;letter-spacing:-0.100px;">200</div>
<div class="t" style="left:3030.6px;top:514.0px;font-size:26px;color:#000;letter-spacing:-0.075px;">58938</div>
<div class="t" style="left:3242.7px;top:514.0px;font-size:26px;color:#000;letter-spacing:0.060px;">yellow</div>
<div class="a" style="left:1346.0px;top:548.0px;width:2088.0px;height:40.0px;background:#ffff66;"></div>
<div class="t" style="left:1351.7px;top:554.0px;font-size:26px;color:#000;letter-spacing:-1.200px;">GET</div>
<div class="t" style="left:1560.3px;top:554.0px;font-size:26px;color:#000;letter-spacing:0.614px;">https://pss.bdstatic.com/static/superman/js/min_s...</div>
<div class="t" style="left:2192.2px;top:554.0px;font-size:26px;color:#000;letter-spacing:-0.219px;">All URL (13), Linkfinder (34), Username Field (1), U...</div>
<div class="t" style="left:2821.1px;top:554.0px;font-size:26px;color:#000;letter-spacing:-0.100px;">200</div>
<div class="t" style="left:3030.6px;top:554.0px;font-size:26px;color:#000;letter-spacing:-0.200px;">65007</div>
<div class="t" style="left:3242.7px;top:554.0px;font-size:26px;color:#000;letter-spacing:0.060px;">yellow</div>
<div class="a" style="left:1346.0px;top:588.0px;width:2088.0px;height:40.0px;background:#b4b4b4;"></div>
<div class="t" style="left:1351.7px;top:594.0px;font-size:26px;color:#000;letter-spacing:-1.200px;">GET</div>
<div class="t" style="left:1560.3px;top:594.0px;font-size:26px;color:#000;letter-spacing:0.662px;">https://pss.bdstatic.com/static/superman/js/lib/jqu...</div>
<div class="t" style="left:2190.2px;top:594.0px;font-size:26px;color:#000;letter-spacing:-0.054px;">Linkfinder (4)</div>
<div class="t" style="left:2821.1px;top:594.0px;font-size:26px;color:#000;letter-spacing:-0.100px;">200</div>
<div class="t" style="left:3029.6px;top:594.0px;font-size:26px;color:#000;letter-spacing:0.180px;">143929</div>
<div class="t" style="left:3241.7px;top:594.0px;font-size:26px;color:#000;letter-spacing:-0.867px;">gray</div>
<div class="a" style="left:3437.5px;top:302.0px;width:12.0px;height:58.0px;background:#dedede;border-radius:6px;"></div>
<div class="a" style="left:1346.0px;top:628.0px;width:2088.0px;height:20.0px;background:#ffffff;"></div>
<div class="a" style="left:1349.8px;top:632.0px;width:2067.6px;height:12.0px;background:#e4e4e4;border-radius:6px;"></div>
<div class="a" style="left:1344.0px;top:653.7px;width:2112.0px;height:1.9px;background:#b9b4b4;"></div>
<div class="a" style="left:2387.5px;top:651.3px;width:7.0px;height:7.0px;background:#ababab;border-radius:50%;"></div>
<div class="a" style="left:2397.5px;top:651.3px;width:7.0px;height:7.0px;background:#ababab;border-radius:50%;"></div>
<div class="a" style="left:2407.5px;top:651.3px;width:7.0px;height:7.0px;background:#ababab;border-radius:50%;"></div>
<div class="a" style="left:1344.0px;top:660.0px;width:335.4px;height:46.0px;background:#fafafa;"></div>
<div class="t" style="left:1373.4px;top:666.5px;font-size:26px;color:#000;letter-spacing:0.167px;">Request</div>
<div class="t" style="left:1530.7px;top:666.5px;font-size:26px;color:#000;letter-spacing:0.414px;">Response</div>
<div class="a" style="left:1344.0px;top:702.0px;width:158.0px;height:4.0px;background:#ff6633;"></div>
<div class="a" style="left:1344.0px;top:706.3px;width:2112.0px;height:1.7px;background:#c9ced0;"></div>
<div class="t" style="left:1373.4px;top:724.1px;font-size:26px;color:#444444;letter-spacing:-0.240px;">Pretty</div>
<div class="t" style="left:1501.5px;top:724.1px;font-size:26px;color:#1a1a1a;letter-spacing:-0.250px;">Raw</div>
<div class="t" style="left:1613.3px;top:724.1px;font-size:26px;color:#444444;letter-spacing:0.350px;">Hex</div>
<div class="t" style="left:1719.2px;top:724.1px;font-size:26px;color:#444444;letter-spacing:0.230px;">CollectInfo</div>
<div class="a" style="left:1472.0px;top:760.0px;width:112.0px;height:4.0px;background:#ff6633;"></div>
<div class="a" style="left:1344.0px;top:764.4px;width:2112.0px;height:1.6px;background:#c9ced0;"></div>
<div class="a" style="left:3224.1px;top:717.9px;width:37.7px;height:35.8px;background:#d9d9d9;border-radius:8px;"></div>
<svg style="left:0;top:0" width="1" height="1"><g fill="none" stroke="#929292" stroke-width="2.1" stroke-linecap="round"><path d="M3240,727.6 C3245.5,726.5 3252,729.5 3255.9,736.6 C3255.2,738.4 3254.3,739.8 3253.2,741.1"/><path d="M3234.1,729.9 C3232,731.8 3230.3,734 3229,736.8 C3232,742.5 3237.3,747.2 3242.8,747.2 C3245,747.2 3247.2,746.4 3248.9,745.2"/><path d="M3240.8,734.4 C3239.2,736.5 3239.4,739.6 3244.5,740.6"/><path d="M3229.2,722.8 L3255.5,749.1"/></g></svg>
<div class="a" style="left:3282.2px;top:717.9px;width:37.7px;height:35.8px;background:#2565a0;border-radius:8px;"></div>
<svg style="left:0;top:0" width="1" height="1"><g fill="none" stroke="#ffffff" stroke-width="2.8" stroke-linecap="round"><path d="M3290.3,728.3 L3310.3,728.3"/><path d="M3290.3,736.6 L3307.2,736.6 C3312.2,736.6 3312.3,744.4 3307.2,744.4 L3304.5,744.4"/><path d="M3290.3,744.4 L3296.8,744.4"/></g><path d="M3300.6,744.4 L3304.4,740.4 L3304.4,748.4 Z" fill="#fff" stroke="#fff" stroke-width="1.2" stroke-linejoin="round"/></svg>
<div class="t" style="left:3348.8px;top:722.5px;font-size:26px;color:#000;letter-spacing:1.200px;">\n</div>
<div class="a" style="left:3407.0px;top:728.2px;width:20.0px;height:2.4px;background:#000;border-radius:1.2px;"></div>
<div class="a" style="left:3407.0px;top:735.7px;width:20.0px;height:2.4px;background:#000;border-radius:1.2px;"></div>
<div class="a" style="left:3407.0px;top:743.1px;width:20.0px;height:2.4px;background:#000;border-radius:1.2px;"></div>
<div class="a" style="left:1389.9px;top:766.0px;width:1.1px;height:1056.0px;background:#dcdcdc;"></div>
<div class="a" style="left:1344.0px;top:1822.0px;width:2112.0px;height:1.3px;background:#b6b1b1;"></div>
<div class="a" style="left:1391.7px;top:774.0px;width:2044.1px;height:34.0px;background:#eeeeee;"></div>
<div class="t" style="left:1366.0px;top:778.5px;font-size:26.67px;color:#777777;letter-spacing:-0.600px;font-family:'Liberation Mono', monospace;transform:scaleY(1.2);transform-origin:0 22px;-webkit-text-stroke:0.3px;">1</div>
<div class="t" style="left:1402.9px;top:775.3px;font-size:26.67px;color:#1f1f1f;font-family:'Liberation Mono', monospace;transform:scaleY(1.2);transform-origin:0 22px;-webkit-text-stroke:0.3px;">GET / HTTP/1.1</div>
<div class="t" style="left:1366.0px;top:812.5px;font-size:26.67px;color:#777777;letter-spacing:-0.600px;font-family:'Liberation Mono', monospace;transform:scaleY(1.2);transform-origin:0 22px;-webkit-text-stroke:0.3px;">2</div>
<div class="t" style="left:1402.9px;top:809.3px;font-size:26.67px;color:#000080;font-family:'Liberation Mono', monospace;transform:scaleY(1.2);transform-origin:0 22px;-webkit-text-stroke:0.3px;">Host</div>
<div class="t" style="left:1466.9px;top:809.3px;font-size:26.67px;color:#1f1f1f;font-family:'Liberation Mono', monospace;transform:scaleY(1.2);transform-origin:0 22px;-webkit-text-stroke:0.3px;">: www.baidu.com</div>
<div class="t" style="left:1366.0px;top:846.5px;font-size:26.67px;color:#777777;letter-spacing:-0.600px;font-family:'Liberation Mono', monospace;transform:scaleY(1.2);transform-origin:0 22px;-webkit-text-stroke:0.3px;">3</div>
<div class="t" style="left:1402.9px;top:843.3px;font-size:26.67px;color:#000080;font-family:'Liberation Mono', monospace;transform:scaleY(1.2);transform-origin:0 22px;-webkit-text-stroke:0.3px;">Sec-Ch-Ua</div>
<div class="t" style="left:1546.9px;top:843.3px;font-size:26.67px;color:#1f1f1f;font-family:'Liberation Mono', monospace;transform:scaleY(1.2);transform-origin:0 22px;-webkit-text-stroke:0.3px;">: "Chromium";v="125", "Not.A/Brand";v="24"</div>
<div class="t" style="left:1366.0px;top:880.5px;font-size:26.67px;color:#777777;letter-spacing:-0.600px;font-family:'Liberation Mono', monospace;transform:scaleY(1.2);transform-origin:0 22px;-webkit-text-stroke:0.3px;">4</div>
<div class="t" style="left:1402.9px;top:877.3px;font-size:26.67px;color:#000080;font-family:'Liberation Mono', monospace;transform:scaleY(1.2);transform-origin:0 22px;-webkit-text-stroke:0.3px;">Sec-Ch-Ua-Mobile</div>
<div class="t" style="left:1658.9px;top:877.3px;font-size:26.67px;color:#1f1f1f;font-family:'Liberation Mono', monospace;transform:scaleY(1.2);transform-origin:0 22px;-webkit-text-stroke:0.3px;">: ?0</div>
<div class="t" style="left:1366.0px;top:914.5px;font-size:26.67px;color:#777777;letter-spacing:-0.600px;font-family:'Liberation Mono', monospace;transform:scaleY(1.2);transform-origin:0 22px;-webkit-text-stroke:0.3px;">5</div>
<div class="t" style="left:1402.9px;top:911.3px;font-size:26.67px;color:#000080;font-family:'Liberation Mono', monospace;transform:scaleY(1.2);transform-origin:0 22px;-webkit-text-stroke:0.3px;">Sec-Ch-Ua-Platform</div>
<div class="t" style="left:1690.9px;top:911.3px;font-size:26.67px;color:#1f1f1f;font-family:'Liberation Mono', monospace;transform:scaleY(1.2);transform-origin:0 22px;-webkit-text-stroke:0.3px;">: "macOS"</div>
<div class="t" style="left:1366.0px;top:948.5px;font-size:26.67px;color:#777777;letter-spacing:-0.600px;font-family:'Liberation Mono', monospace;transform:scaleY(1.2);transform-origin:0 22px;-webkit-text-stroke:0.3px;">6</div>
<div class="t" style="left:1402.9px;top:945.3px;font-size:26.67px;color:#000080;font-family:'Liberation Mono', monospace;transform:scaleY(1.2);transform-origin:0 22px;-webkit-text-stroke:0.3px;">Upgrade-Insecure-Requests</div>
<div class="t" style="left:1802.9px;top:945.3px;font-size:26.67px;color:#1f1f1f;font-family:'Liberation Mono', monospace;transform:scaleY(1.2);transform-origin:0 22px;-webkit-text-stroke:0.3px;">: 1</div>
<div class="t" style="left:1366.0px;top:982.5px;font-size:26.67px;color:#777777;letter-spacing:-0.600px;font-family:'Liberation Mono', monospace;transform:scaleY(1.2);transform-origin:0 22px;-webkit-text-stroke:0.3px;">7</div>
<div class="t" style="left:1402.9px;top:979.3px;font-size:26.67px;color:#000080;font-family:'Liberation Mono', monospace;transform:scaleY(1.2);transform-origin:0 22px;-webkit-text-stroke:0.3px;">User-Agent</div>
<div class="t" style="left:1562.9px;top:979.3px;font-size:26.67px;color:#1f1f1f;font-family:'Liberation Mono', monospace;transform:scaleY(1.2);transform-origin:0 22px;-webkit-text-stroke:0.3px;">: Mozilla/5.0 (Windows NT 10.0; Win64; x64) AppleWebKit/537.36 (KHTML, like Gecko) Chrome/125.0.6422.60</div>
<div class="t" style="left:1402.9px;top:1013.3px;font-size:26.67px;color:#1f1f1f;font-family:'Liberation Mono', monospace;transform:scaleY(1.2);transform-origin:0 22px;-webkit-text-stroke:0.3px;">Safari/537.36</div>
<div class="t" style="left:1366.0px;top:1050.5px;font-size:26.67px;color:#777777;letter-spacing:-0.600px;font-family:'Liberation Mono', monospace;transform:scaleY(1.2);transform-origin:0 22px;-webkit-text-stroke:0.3px;">8</div>
<div class="t" style="left:1402.9px;top:1047.3px;font-size:26.67px;color:#000080;font-family:'Liberation Mono', monospace;transform:scaleY(1.2);transform-origin:0 22px;-webkit-text-stroke:0.3px;">Accept</div>
<div class="t" style="left:1498.9px;top:1047.3px;font-size:26.67px;color:#1f1f1f;font-family:'Liberation Mono', monospace;transform:scaleY(1.2);transform-origin:0 22px;-webkit-text-stroke:0.3px;">:</div>
<div class="t" style="left:1402.9px;top:1081.3px;font-size:26.67px;color:#1f1f1f;font-family:'Liberation Mono', monospace;transform:scaleY(1.2);transform-origin:0 22px;-webkit-text-stroke:0.3px;">text/html,application/xhtml+xml,application/xml;q=0.9,image/avif,image/webp,image/apng,*/*;q=0.8,application/signed-exchange;v</div>
<div class="t" style="left:1402.9px;top:1115.3px;font-size:26.67px;color:#1f1f1f;font-family:'Liberation Mono', monospace;transform:scaleY(1.2);transform-origin:0 22px;-webkit-text-stroke:0.3px;">=b3;q=0.7</div>
<div class="t" style="left:1366.0px;top:1152.5px;font-size:26.67px;color:#777777;letter-spacing:-0.600px;font-family:'Liberation Mono', monospace;transform:scaleY(1.2);transform-origin:0 22px;-webkit-text-stroke:0.3px;">9</div>
<div class="t" style="left:1402.9px;top:1149.3px;font-size:26.67px;color:#000080;font-family:'Liberation Mono', monospace;transform:scaleY(1.2);transform-origin:0 22px;-webkit-text-stroke:0.3px;">Sec-Fetch-Site</div>
<div class="t" style="left:1626.9px;top:1149.3px;font-size:26.67px;color:#1f1f1f;font-family:'Liberation Mono', monospace;transform:scaleY(1.2);transform-origin:0 22px;-webkit-text-stroke:0.3px;">: none</div>
<div class="t" style="left:1350.6px;top:1186.5px;font-size:26.67px;color:#777777;letter-spacing:-0.600px;font-family:'Liberation Mono', monospace;transform:scaleY(1.2);transform-origin:0 22px;-webkit-text-stroke:0.3px;">10</div>
<div class="t" style="left:1402.9px;top:1183.3px;font-size:26.67px;color:#000080;font-family:'Liberation Mono', monospace;transform:scaleY(1.2);transform-origin:0 22px;-webkit-text-stroke:0.3px;">Sec-Fetch-Mode</div>
<div class="t" style="left:1626.9px;top:1183.3px;font-size:26.67px;color:#1f1f1f;font-family:'Liberation Mono', monospace;transform:scaleY(1.2);transform-origin:0 22px;-webkit-text-stroke:0.3px;">: navigate</div>
<div class="t" style="left:1350.6px;top:1220.5px;font-size:26.67px;color:#777777;letter-spacing:-0.600px;font-family:'Liberation Mono', monospace;transform:scaleY(1.2);transform-origin:0 22px;-webkit-text-stroke:0.3px;">11</div>
<div class="t" style="left:1402.9px;top:1217.3px;font-size:26.67px;color:#000080;font-family:'Liberation Mono', monospace;transform:scaleY(1.2);transform-origin:0 22px;-webkit-text-stroke:0.3px;">Sec-Fetch-User</div>
<div class="t" style="left:1626.9px;top:1217.3px;font-size:26.67px;color:#1f1f1f;font-family:'Liberation Mono', monospace;transform:scaleY(1.2);transform-origin:0 22px;-webkit-text-stroke:0.3px;">: ?1</div>
<div class="t" style="left:1350.6px;top:1254.5px;font-size:26.67px;color:#777777;letter-spacing:-0.600px;font-family:'Liberation Mono', monospace;transform:scaleY(1.2);transform-origin:0 22px;-webkit-text-stroke:0.3px;">12</div>
<div class="t" style="left:1402.9px;top:1251.3px;font-size:26.67px;color:#000080;font-family:'Liberation Mono', monospace;transform:scaleY(1.2);transform-origin:0 22px;-webkit-text-stroke:0.3px;">Sec-Fetch-Dest</div>
<div class="t" style="left:1626.9px;top:1251.3px;font-size:26.67px;color:#1f1f1f;font-family:'Liberation Mono', monospace;transform:scaleY(1.2);transform-origin:0 22px;-webkit-text-stroke:0.3px;">: document</div>
<div class="t" style="left:1350.6px;top:1288.5px;font-size:26.67px;color:#777777;letter-spacing:-0.600px;font-family:'Liberation Mono', monospace;transform:scaleY(1.2);transform-origin:0 22px;-webkit-text-stroke:0.3px;">13</div>
<div class="t" style="left:1402.9px;top:1285.3px;font-size:26.67px;color:#000080;font-family:'Liberation Mono', monospace;transform:scaleY(1.2);transform-origin:0 22px;-webkit-text-stroke:0.3px;">Accept-Encoding</div>
<div class="t" style="left:1642.9px;top:1285.3px;font-size:26.67px;color:#1f1f1f;font-family:'Liberation Mono', monospace;transform:scaleY(1.2);transform-origin:0 22px;-webkit-text-stroke:0.3px;">: gzip, deflate, br</div>
<div class="t" style="left:1350.6px;top:1322.5px;font-size:26.67px;color:#777777;letter-spacing:-0.600px;font-family:'Liberation Mono', monospace;transform:scaleY(1.2);transform-origin:0 22px;-webkit-text-stroke:0.3px;">14</div>
<div class="t" style="left:1402.9px;top:1319.3px;font-size:26.67px;color:#000080;font-family:'Liberation Mono', monospace;transform:scaleY(1.2);transform-origin:0 22px;-webkit-text-stroke:0.3px;">Accept-Language</div>
<div class="t" style="left:1642.9px;top:1319.3px;font-size:26.67px;color:#1f1f1f;font-family:'Liberation Mono', monospace;transform:scaleY(1.2);transform-origin:0 22px;-webkit-text-stroke:0.3px;">: zh-CN,zh;q=0.9</div>
<div class="t" style="left:1350.6px;top:1356.5px;font-size:26.67px;color:#777777;letter-spacing:-0.600px;font-family:'Liberation Mono', monospace;transform:scaleY(1.2);transform-origin:0 22px;-webkit-text-stroke:0.3px;">15</div>
<div class="t" style="left:1402.9px;top:1353.3px;font-size:26.67px;color:#000080;font-family:'Liberation Mono', monospace;transform:scaleY(1.2);transform-origin:0 22px;-webkit-text-stroke:0.3px;">Priority</div>
<div class="t" style="left:1530.9px;top:1353.3px;font-size:26.67px;color:#1f1f1f;font-family:'Liberation Mono', monospace;transform:scaleY(1.2);transform-origin:0 22px;-webkit-text-stroke:0.3px;">: u=0, i</div>
<div class="t" style="left:1350.6px;top:1390.5px;font-size:26.67px;color:#777777;letter-spacing:-0.600px;font-family:'Liberation Mono', monospace;transform:scaleY(1.2);transform-origin:0 22px;-webkit-text-stroke:0.3px;">16</div>
<div class="t" style="left:1402.9px;top:1387.3px;font-size:26.67px;color:#000080;font-family:'Liberation Mono', monospace;transform:scaleY(1.2);transform-origin:0 22px;-webkit-text-stroke:0.3px;">Connection</div>
<div class="t" style="left:1562.9px;top:1387.3px;font-size:26.67px;color:#1f1f1f;font-family:'Liberation Mono', monospace;transform:scaleY(1.2);transform-origin:0 22px;-webkit-text-stroke:0.3px;">: keep-alive</div>
<div class="t" style="left:1350.6px;top:1424.5px;font-size:26.67px;color:#777777;letter-spacing:-0.600px;font-family:'Liberation Mono', monospace;transform:scaleY(1.2);transform-origin:0 22px;-webkit-text-stroke:0.3px;">17</div>
<div class="t" style="left:1350.6px;top:1458.5px;font-size:26.67px;color:#777777;letter-spacing:-0.600px;font-family:'Liberation Mono', monospace;transform:scaleY(1.2);transform-origin:0 22px;-webkit-text-stroke:0.3px;">18</div>
<svg style="left:0;top:0" width="1" height="1"><g fill="none" stroke="#464646" stroke-width="3.1" stroke-linecap="round"><circle cx="1376" cy="1858" r="18.4"/><path d="M1370.6,1852.3 C1371.6,1849.6 1373.8,1848.3 1376.2,1848.3 C1379.2,1848.3 1381.2,1850.5 1381.2,1853.2 C1381.2,1856.4 1378.6,1857.8 1375.7,1859.3"/></g><circle cx="1376" cy="1867" r="2.0" fill="#464646"/></svg>
<svg style="left:0;top:0" width="1" height="1"><path d="M1425.73,1844.46 L1427.04,1839.33 L1432.96,1839.33 L1434.27,1844.46 A14.20,14.20 0 0 1 1436.56,1845.40 L1441.11,1842.71 L1445.29,1846.89 L1442.60,1851.44 A14.20,14.20 0 0 1 1443.54,1853.73 L1448.67,1855.04 L1448.67,1860.96 L1443.54,1862.27 A14.20,14.20 0 0 1 1442.60,1864.56 L1445.29,1869.11 L1441.11,1873.29 L1436.56,1870.60 A14.20,14.20 0 0 1 1434.27,1871.54 L1432.96,1876.67 L1427.04,1876.67 L1425.73,1871.54 A14.20,14.20 0 0 1 1423.44,1870.60 L1418.89,1873.29 L1414.71,1869.11 L1417.40,1864.56 A14.20,14.20 0 0 1 1416.46,1862.27 L1411.33,1860.96 L1411.33,1855.04 L1416.46,1853.73 A14.20,14.20 0 0 1 1417.40,1851.44 L1414.71,1846.89 L1418.89,1842.71 L1423.44,1845.40 A14.20,14.20 0 0 1 1425.73,1844.46 Z" fill="none" stroke="#464646" stroke-width="3.1" stroke-linejoin="round"/><circle cx="1430" cy="1858" r="6.80" fill="none" stroke="#464646" stroke-width="3.1"/></svg>
<div class="a" style="left:1462.4px;top:1834.5px;width:46.9px;height:46.5px;background:#ffffff;border:2px solid #b9b4b4;border-radius:8px;"></div>
<div class="a" style="left:1520.4px;top:1834.5px;width:47.1px;height:46.5px;background:#ffffff;border:2px solid #b9b4b4;border-radius:8px;"></div>
<svg style="left:0;top:0" width="1" height="1"><g fill="none" stroke="#000" stroke-width="2.6" stroke-linecap="round" stroke-linejoin="round"><path d="M1497.5,1857.9 L1474.5,1857.9 M1485.2,1847 L1474.3,1857.9 L1485.2,1868.8"/><path d="M1532.5,1857.9 L1555.5,1857.9 M1544.8,1847 L1555.7,1857.9 L1544.8,1868.8"/></g></svg>
<div class="a" style="left:1588.1px;top:1836.5px;width:1667.4px;height:44.7px;background:#ffffff;border:2px solid #b9b4b4;"></div>
<div class="t" style="left:1601.4px;top:1844.0px;font-size:26px;color:#7c7c7c;letter-spacing:-0.240px;">Search</div>
<svg style="left:0;top:0" width="1" height="1"><g fill="none" stroke="#444" stroke-width="2.2" stroke-linecap="round"><circle cx="3229.9" cy="1855.6" r="8.3"/><path d="M3223.9,1861.6 L3215.2,1870.3"/></g></svg>
<div class="t" style="left:3300.0px;top:1844.0px;font-size:26px;color:#000;letter-spacing:-0.073px;">0 highlights</div>
<div class="a" style="left:0.0px;top:1895.5px;width:3510.0px;height:14.5px;background:#f9f9f9;"></div>
<svg style="left:0;top:0" width="3510" height="1910"><path d="M0,0 L21,0 A21,21 0 0 0 0,21 Z" fill="#f8f8f8"/><path d="M0,21 A21,21 0 0 1 21,0" fill="none" stroke="#a9a9a9" stroke-width="1.2"/><path d="M3510,0 L3489,0 A21,21 0 0 1 3510,21 Z" fill="#f8f8f8"/><path d="M3489,0 A21,21 0 0 1 3510,21" fill="none" stroke="#a9a9a9" stroke-width="1.2"/><path d="M0,1910 L0,1886 A24,24 0 0 0 24,1910 Z" fill="#cdcdcd"/><path d="M0,1886 A24,24 0 0 0 24,1910" fill="none" stroke="#9a9a9a" stroke-width="1.2"/><path d="M3510,1910 L3510,1886 A24,24 0 0 1 3486,1910 Z" fill="#cdcdcd"/><path d="M3510,1886 A24,24 0 0 1 3486,1910" fill="none" stroke="#9a9a9a" stroke-width="1.2"/></svg></body></html>
